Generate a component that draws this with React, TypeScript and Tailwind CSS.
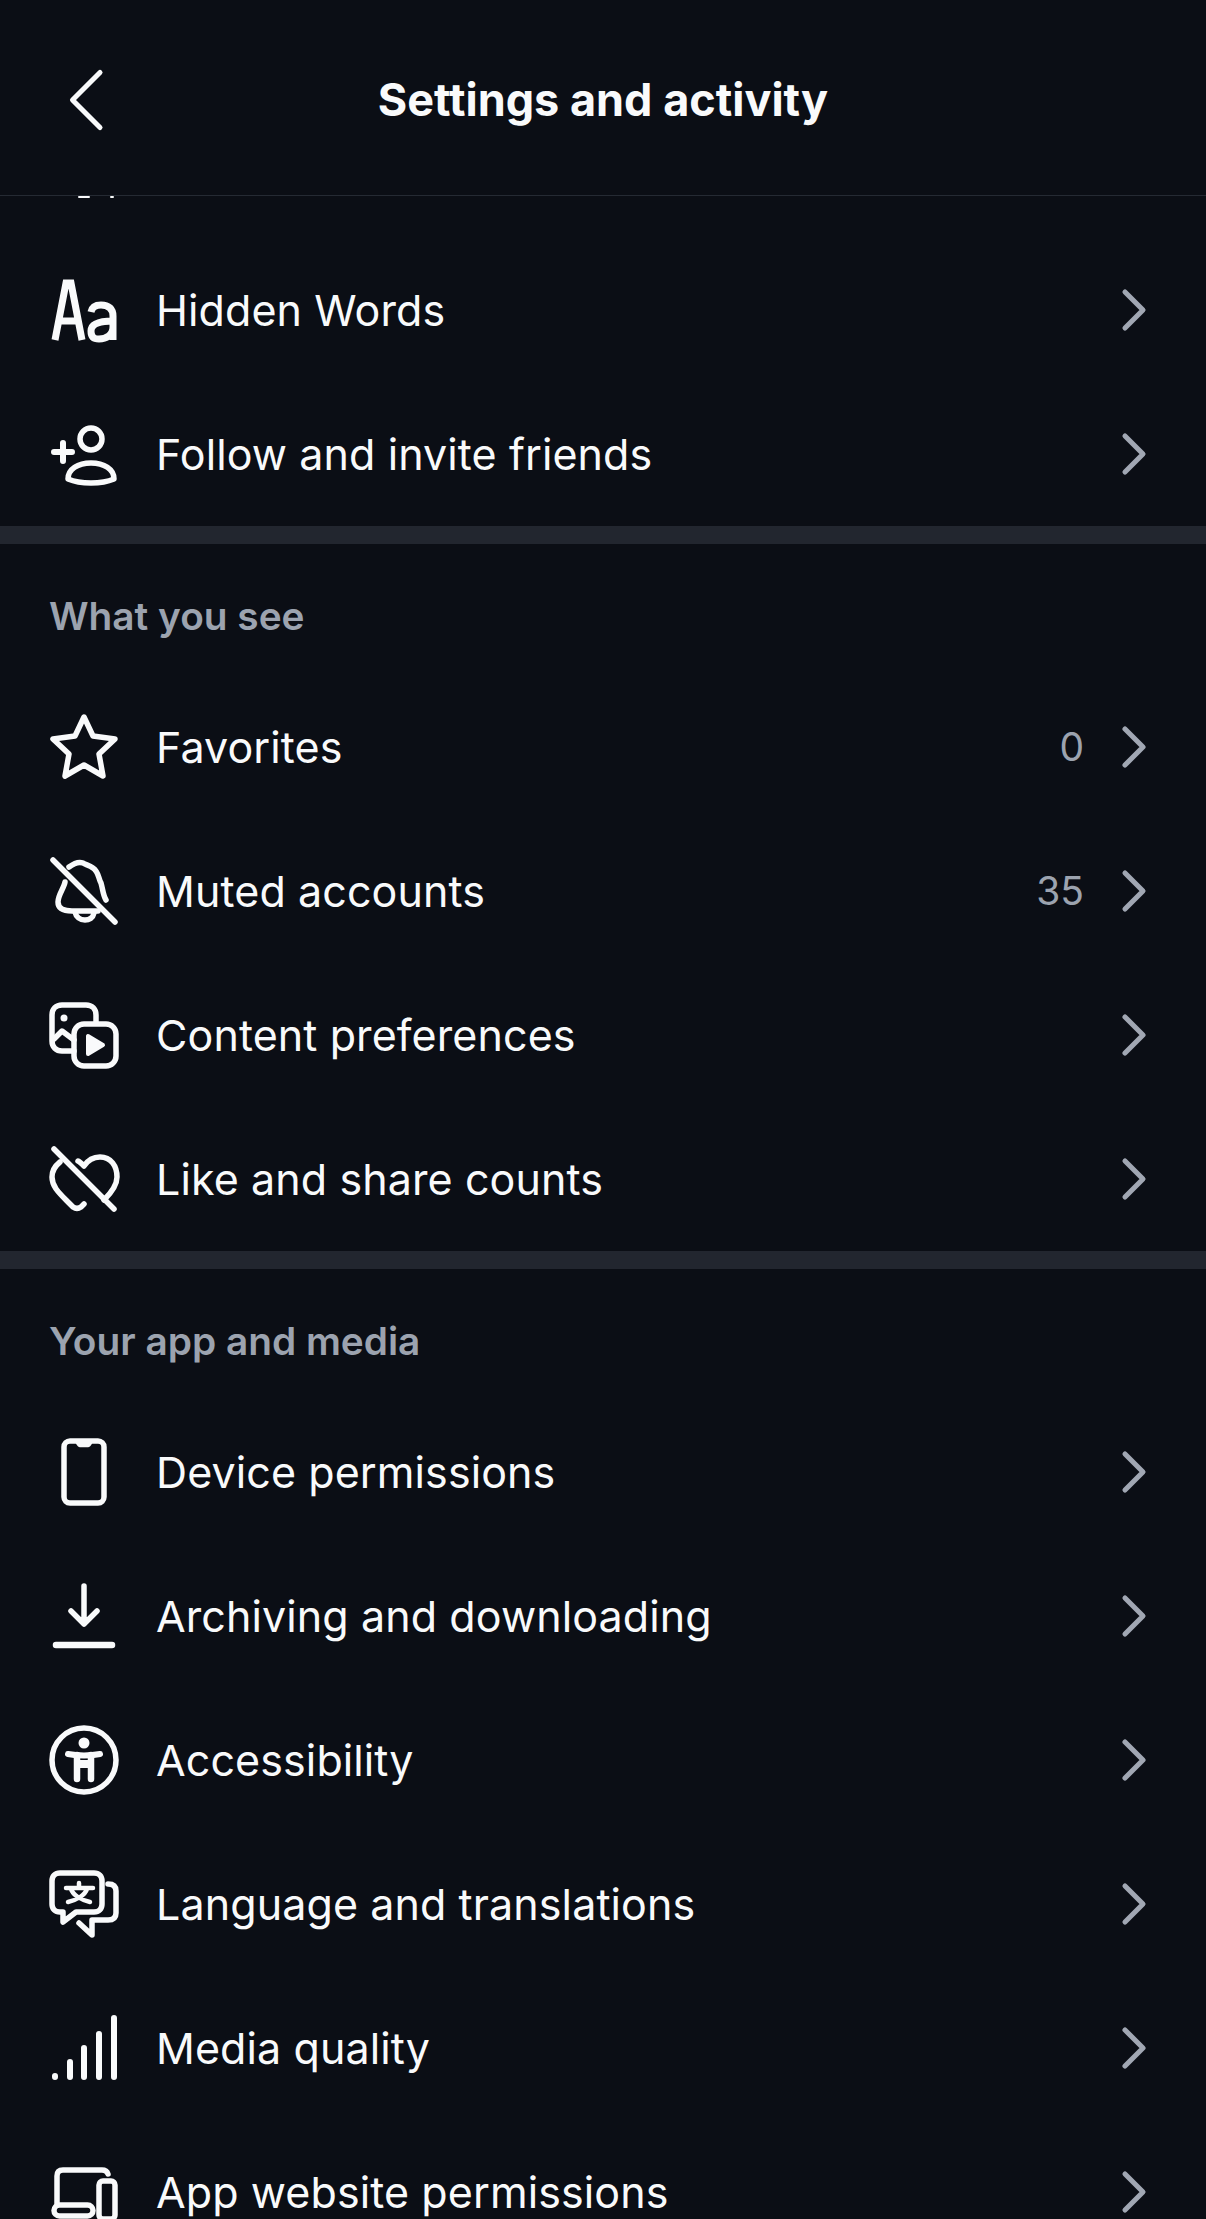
import type { ReactNode } from "react";
import { ChevronRight } from "lucide-react";

const font = "font-['Inter','Liberation_Sans',sans-serif]";

function Svg({ children }: { children: ReactNode }) {
  return (
    <svg
      viewBox="0 0 72 72"
      className="h-[72px] w-[72px]"
      fill="none"
      stroke="#f9fafb"
      strokeWidth="5.5"
      strokeLinecap="round"
      strokeLinejoin="round"
    >
      {children}
    </svg>
  );
}

const icons = {
  // only the very bottom of this icon shows under the header
  limited: (
    <Svg>
      <path d="M31 67h10M63 67h2" strokeWidth="2" />
    </Svg>
  ),
  words: (
    <Svg>
      <path d="M7 66 18 9h5l11 57M11 47h19" strokeWidth="7" strokeLinecap="butt" strokeLinejoin="miter" />
      <path d="M43 38c1-5 5-7 10-7 8 0 12 4 12 11v24M65 47c-12 0-22 2-22 10 0 6 3 8 8 8 7 0 14-4 14-12" strokeWidth="7" strokeLinecap="butt" />
    </Svg>
  ),
  follow: (
    <Svg>
      <circle cx="43" cy="21" r="11" />
      <path d="M20 61c0-10 10-16 23-16s23 6 23 16c-7 3-15 4-23 4s-16-1-23-4Z" />
      <path d="M6 34h18M15 25v18" strokeWidth="6" />
    </Svg>
  ),
  star: (
    <Svg>
      <path d="m36 6 9 19 22 3-16 15 4 22-19-11-19 11 4-22L5 28l22-3Z" />
    </Svg>
  ),
  muted: (
    <Svg>
      <path d="M5 5l62 62" />
      <path d="M21 12c4-3 9-6 14-4 3 2 6 2 10 5 6 4 5 10 8 15 2 7 2 12 5 17M17 27c-1 6-7 13-7 20 0 7 6 9 14 9h26" />
      <path d="M27 57c1 5 5 8 10 8 4 0 8-2 9-7" />
    </Svg>
  ),
  content: (
    <Svg>
      <path d="M26 52H14C8 52 4 48 4 42V16C4 10 8 6 14 6h24c6 0 10 4 10 10v8" />
      <rect x="26" y="25" width="42" height="42" rx="10" />
      <path d="M40 37v18l15-9Z" fill="#f9fafb" strokeWidth="4" />
      <circle cx="16" cy="19" r="3.5" fill="#f9fafb" stroke="none" />
      <path d="M6 40 14 32l12 9" />
    </Svg>
  ),
  like: (
    <Svg>
      <path d="M6 6l60 60" />
      <path d="M12 19c-5 4-8 9-8 15 0 9 6 15 15 24l6 6c3 2 5 2 8 0l3-3M30 18c2 1 4 3 6 5 4-6 9-9 16-9 11 0 17 9 17 20 0 8-5 15-13 23" />
    </Svg>
  ),
  device: (
    <Svg>
      <rect x="16" y="5" width="40" height="62" rx="6" />
      <path d="M29 7c1 2 2 3 3 3h8c1 0 2-1 3-3Z" fill="#f9fafb" strokeWidth="2.5" />
    </Svg>
  ),
  download: (
    <Svg>
      <path d="M36 6v38M23 31l13 13 13-13" />
      <path d="M8 65h56" strokeWidth="6.5" />
    </Svg>
  ),
  access: (
    <Svg>
      <circle cx="36" cy="36" r="32" />
      <circle cx="36" cy="19" r="5.5" fill="#f9fafb" stroke="none" />
      <path d="M20 30c11 2 21 2 32 0" strokeWidth="6" />
      <path d="M29 31v24M43 31v24" strokeWidth="6.5" />
      <path d="M29 40h14" strokeWidth="8" strokeLinecap="butt" />
    </Svg>
  ),
  language: (
    <Svg>
      <path d="M12 5h34c5 0 8 3 8 8v23c0 5-3 8-8 8H28L15 54v-10h-3c-5 0-8-3-8-8V13c0-5 3-8 8-8Z" />
      <path d="M60 16c5 0 8 2 8 7v22c0 5-3 7-8 7H44v15L31 55" />
      <path d="M18 20h27M31 15v5M23 21c2 6 10 11 19 13M39 21c-2 6-10 11-19 13" strokeWidth="4.5" />
    </Svg>
  ),
  quality: (
    <Svg>
      <path d="M7 64v1M22 50v15M36 36v29M51 22v43M66 6v59" strokeWidth="6" />
    </Svg>
  ),
  web: (
    <Svg>
      <path d="M9 48V20c0-4 2-6 6-6h39c3 0 5 1 6 4" />
      <rect x="6" y="49" width="39" height="11" rx="5.5" />
      <rect x="51" y="25" width="16" height="38" rx="4" />
    </Svg>
  ),
};

function Row({ icon, label, count }: { icon: ReactNode; label: string; count?: string }) {
  return (
    <div className="flex h-[144px] items-center pl-[48px] pr-[36px]">
      <div className="flex w-[108px] shrink-0">{icon}</div>
      <span className="flex-1 text-[43px] font-normal tracking-[0.1px] text-[#f9fafb]">{label}</span>
      {count && <span className="mr-[14px] text-[39px] text-[#9ca3af]">{count}</span>}
      <ChevronRight className="h-[72px] w-[72px] text-[#a1a7b3]" strokeWidth={1.7} />
    </div>
  );
}

function SectionTitle({ children }: { children: ReactNode }) {
  return (
    <div className="flex h-[131px] items-end pb-[30px] pl-[49px] text-[38.8px] font-semibold text-[#9ca3af]">
      {children}
    </div>
  );
}

export default function App() {
  return (
    <div className={`flex h-[2219px] w-[1206px] flex-col overflow-hidden bg-[#0b0e15] ${font}`}>
      <header className="relative z-10 flex h-[196px] shrink-0 items-center justify-center border-b border-[#252a33] bg-[#0b0e15] pt-[4px]">
        <svg viewBox="0 0 48 72" className="absolute left-[67px] top-[67px] h-[66px] w-[44px]" fill="none" stroke="#f9fafb" strokeWidth="5.5" strokeLinecap="round" strokeLinejoin="round">
          <path d="M36 6 6 36l30 30" />
        </svg>
        <h1 className="text-[45px] font-bold text-[#f9fafb]">Settings and activity</h1>
      </header>

      <main className="-mt-[102px]">
        <Row icon={icons.limited} label="" />
        <Row icon={icons.words} label="Hidden Words" />
        <Row icon={icons.follow} label="Follow and invite friends" />
        <div className="h-[18px] bg-[#22262f]" />
        <SectionTitle>What you see</SectionTitle>
        <Row icon={icons.star} label="Favorites" count="0" />
        <Row icon={icons.muted} label="Muted accounts" count="35" />
        <Row icon={icons.content} label="Content preferences" />
        <Row icon={icons.like} label="Like and share counts" />
        <div className="h-[18px] bg-[#22262f]" />
        <SectionTitle>Your app and media</SectionTitle>
        <Row icon={icons.device} label="Device permissions" />
        <Row icon={icons.download} label="Archiving and downloading" />
        <Row icon={icons.access} label="Accessibility" />
        <Row icon={icons.language} label="Language and translations" />
        <Row icon={icons.quality} label="Media quality" />
        <Row icon={icons.web} label="App website permissions" />
      </main>
    </div>
  );
}
